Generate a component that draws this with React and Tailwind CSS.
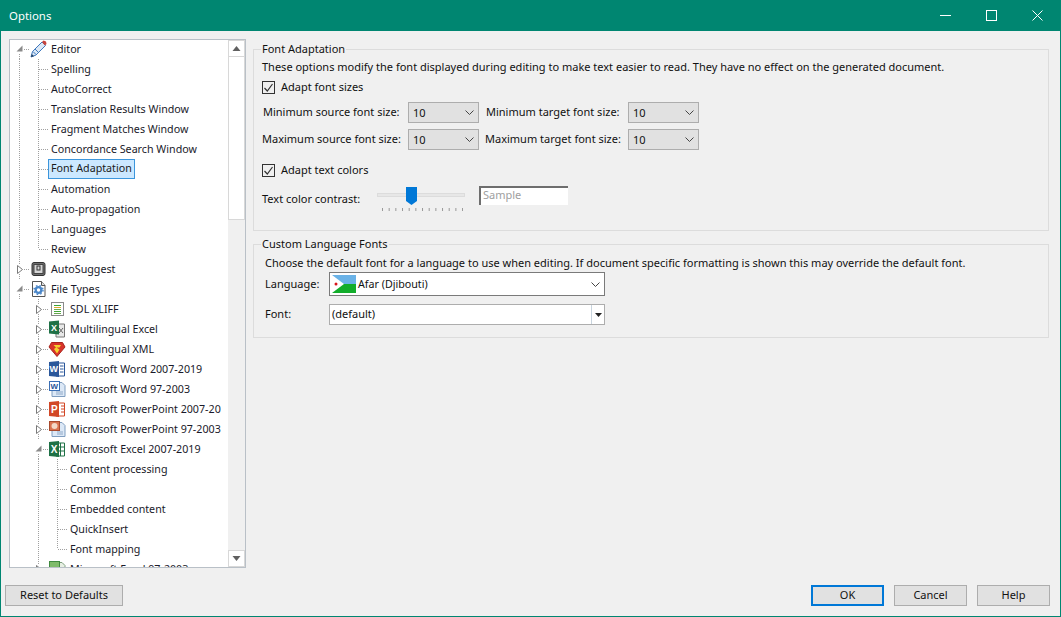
import { ChevronDown } from "lucide-react";

// tree connector cell: "line" | "tee" | "end" | "open" | "closed" | "blank"
function Guide({ type }) {
  const dots = { stroke: "#a0a0a0", strokeWidth: 1, strokeDasharray: "1 1" };
  return (
    <svg width="19" height="20" className="shrink-0">
      {(type === "line" || type === "tee") && <line x1="9.5" y1="0" x2="9.5" y2="20" {...dots} />}
      {type === "end" && <line x1="9.5" y1="0" x2="9.5" y2="10" {...dots} />}
      {(type === "tee" || type === "end") && <line x1="10" y1="10.5" x2="19" y2="10.5" {...dots} />}
      {type === "open" && (
        <>
          <line x1="9.5" y1="15" x2="9.5" y2="20" {...dots} />
          <line x1="14" y1="10.5" x2="19" y2="10.5" {...dots} />
          <path d="M12.5 6.5v6h-6z" fill="#8a8a8a" />
        </>
      )}
      {type === "closed" && (
        <>
          <line x1="9.5" y1="0" x2="9.5" y2="5" {...dots} />
          <line x1="9.5" y1="15" x2="9.5" y2="20" {...dots} />
          <line x1="14" y1="10.5" x2="19" y2="10.5" {...dots} />
          <path d="M7.5 6.5l5 4-5 4z" fill="#fff" stroke="#7a7a7a" />
        </>
      )}
    </svg>
  );
}

const letter = { fontFamily: "Liberation Sans, sans-serif", fontWeight: 700, fill: "#fff" };

function Icon({ name }) {
  return (
    <svg width="19" height="20" viewBox="0 0 19 20" className="shrink-0">
      {name === "pencil" && (
        <>
          <path d="M2 18l1.500-5.500L13 3l3.500 3.500L7 16z" fill="#dbe8f6" stroke="#3f78bd" />
          <path d="M4 12.500l3 3M6 10l3 3" stroke="#3f78bd" />
          <path d="M2 18l.8-3 2.200 2.200z" fill="#24405f" />
          <path d="M13 3l1.500-1.500 2.500 1 .5 2.500-1.500 1.500z" fill="#c8433c" />
        </>
      )}
      {name === "suggest" && (
        <>
          <rect x="3" y="3.500" width="13" height="13" rx="2" fill="#6e6e6e" stroke="#333" />
          <rect x="5" y="5.500" width="9" height="9" fill="#d6d6d6" stroke="#444" />
          <rect x="8" y="7" width="3" height="4" fill="none" stroke="#333" />
        </>
      )}
      {name === "gear" && (
        <>
          <path d="M3.500 2.500h9l3.500 4v11H3.500z" fill="#fff" stroke="#555" />
          <path d="M12.500 2.500v4h3.500" fill="#ddd" stroke="#555" />
          <circle cx="9.500" cy="11" r="2.800" fill="none" stroke="#4a86c8" strokeWidth="2.200" />
          <circle cx="9.500" cy="11" r="4.500" fill="none" stroke="#4a86c8" strokeWidth="1.400" strokeDasharray="1.600 2" />
        </>
      )}
      {name === "xliff" && (
        <>
          <rect x="3.500" y="3.500" width="12" height="13" fill="#fff" stroke="#8a8a8a" />
          <path d="M6 6.500h7M6 12.500h7" stroke="#3fa535" />
          <path d="M6 8.500h7" stroke="#e0a92a" />
          <path d="M6 10.500h7M6 14.500h7" stroke="#6aa84f" />
        </>
      )}
      {name === "mlexcel" && (
        <>
          <path d="M8 5h8.500v13H8z" fill="#e8e8e8" stroke="#777" />
          <path d="M11 9l4 5M15 9l-4 5" stroke="#666" />
          <path d="M1 2.500l10-1v14l-10-1z" fill="#1f7146" />
          <text x="3" y="12" fontSize="9" style={letter}>X</text>
        </>
      )}
      {name === "xml" && (
        <>
          <path d="M3.500 3.500h11L17 8l-8 9.500L1 8z" fill="#d8342a" stroke="#a8241c" />
          <path d="M5.500 6h7.500L11.500 8.500H8.500l3 2-2.500 4-3-4.500 2-1.500z" fill="#f5d22e" />
        </>
      )}
      {name === "word" && (
        <>
          <path d="M8 4h8.500v13H8z" fill="#fff" stroke="#2b579a" />
          <path d="M12 7h3.500M12 10h3.500M12 13h3.500" stroke="#2b579a" />
          <path d="M1 3l10-1v16L1 17z" fill="#2b579a" />
          <text x="1.500" y="13" fontSize="9" style={letter}>W</text>
        </>
      )}
      {name === "oldword" && (
        <>
          <path d="M4 3.500h10l3 3v11H4z" fill="#dce8f6" stroke="#7f9dbf" />
          <path d="M8 13h7M8 15h7" stroke="#8fa9c8" />
          <rect x="1.500" y="2.500" width="10" height="9" fill="#fff" stroke="#3b6fb5" />
          <text x="2.500" y="10" fontSize="8" style={{ ...letter, fill: "#2b579a" }}>W</text>
        </>
      )}
      {name === "ppt" && (
        <>
          <path d="M8 4h8.500v13H8z" fill="#fff" stroke="#d24726" />
          <path d="M13 7h3M13 10h3M13 13h3" stroke="#d24726" />
          <path d="M1 3l10-1v16L1 17z" fill="#d24726" />
          <text x="3" y="13.500" fontSize="10" style={letter}>P</text>
        </>
      )}
      {name === "oldppt" && (
        <>
          <path d="M4 3.500h10l3 3v11H4z" fill="#dce8f6" stroke="#7f9dbf" />
          <path d="M9 13h6M9 15h6" stroke="#8fa9c8" />
          <rect x="1.500" y="2.500" width="10" height="9" fill="#d9734f" stroke="#a8492c" />
          <circle cx="6.500" cy="7" r="3" fill="#f3d9c6" />
        </>
      )}
      {name === "excel" && (
        <>
          <path d="M8 4h8.500v13H8z" fill="#fff" stroke="#1f7146" />
          <path d="M12.500 4v13M8 8h8.500M8 12h8.500" stroke="#1f7146" />
          <path d="M1 3l10-1v16L1 17z" fill="#1f7146" />
          <text x="2.800" y="13.500" fontSize="10" style={letter}>X</text>
        </>
      )}
      {name === "oldexcel" && (
        <>
          <path d="M4 3.500h10l3 3v11H4z" fill="#e8f0e4" stroke="#7f9f7f" />
          <rect x="1.500" y="2.500" width="10" height="9" fill="#7fbb6a" stroke="#3f8a3f" />
        </>
      )}
    </svg>
  );
}

const treeRows = [
  { guides: ["open"], icon: "pencil", label: "Editor" },
  { guides: ["line", "tee"], label: "Spelling" },
  { guides: ["line", "tee"], label: "AutoCorrect" },
  { guides: ["line", "tee"], label: "Translation Results Window" },
  { guides: ["line", "tee"], label: "Fragment Matches Window" },
  { guides: ["line", "tee"], label: "Concordance Search Window" },
  { guides: ["line", "tee"], label: "Font Adaptation", selected: true },
  { guides: ["line", "tee"], label: "Automation" },
  { guides: ["line", "tee"], label: "Auto-propagation" },
  { guides: ["line", "tee"], label: "Languages" },
  { guides: ["line", "end"], label: "Review" },
  { guides: ["closed"], icon: "suggest", label: "AutoSuggest" },
  { guides: ["open"], icon: "gear", label: "File Types" },
  { guides: ["blank", "closed"], icon: "xliff", label: "SDL XLIFF" },
  { guides: ["blank", "closed"], icon: "mlexcel", label: "Multilingual Excel" },
  { guides: ["blank", "closed"], icon: "xml", label: "Multilingual XML" },
  { guides: ["blank", "closed"], icon: "word", label: "Microsoft Word 2007-2019" },
  { guides: ["blank", "closed"], icon: "oldword", label: "Microsoft Word 97-2003" },
  { guides: ["blank", "closed"], icon: "ppt", label: "Microsoft PowerPoint 2007-20" },
  { guides: ["blank", "closed"], icon: "oldppt", label: "Microsoft PowerPoint 97-2003" },
  { guides: ["blank", "open"], icon: "excel", label: "Microsoft Excel 2007-2019" },
  { guides: ["blank", "line", "tee"], label: "Content processing" },
  { guides: ["blank", "line", "tee"], label: "Common" },
  { guides: ["blank", "line", "tee"], label: "Embedded content" },
  { guides: ["blank", "line", "tee"], label: "QuickInsert" },
  { guides: ["blank", "line", "end"], label: "Font mapping" },
  { guides: ["blank", "closed"], icon: "oldexcel", label: "Microsoft Excel 97-2003" },
];

function TreeRow({ row }) {
  return (
    <div className="flex h-5 items-center whitespace-nowrap">
      {row.guides.map((g, i) => (
        <Guide key={i} type={g} />
      ))}
      {row.icon && <Icon name={row.icon} />}
      <span
        className={
          row.selected
            ? "h-[20px] border border-[#3c96dc] bg-[#cce8ff] px-[2px] leading-[17px] text-[#1a1a1a]"
            : "ml-[3px] text-[#1a1a2a]"
        }
      >
        {row.label}
      </span>
    </div>
  );
}

function ScrollButton({ up }) {
  return (
    <div className="flex h-[17px] items-center justify-center border border-[#d8d8d8] bg-white">
      <svg width="9" height="5">
        <path d={up ? "M0.500 5l4-5 4 5z" : "M0.500 0l4 5 4-5z"} fill="#606060" />
      </svg>
    </div>
  );
}

function Check({ label }) {
  return (
    <label className="flex h-[14px] items-center gap-[6px]">
      <span className="flex h-[13px] w-[13px] items-center justify-center border border-[#333] bg-[#f0f0f0]">
        <svg width="11" height="11">
          <path d="M1.500 6l2.800 3L9.500 2" fill="none" stroke="#333" strokeWidth="1.200" />
        </svg>
      </span>
      {label}
    </label>
  );
}

function Chevron() {
  return (
    <svg width="9" height="5" className="shrink-0">
      <path d="M0.500 0.500l4 4 4-4" fill="none" stroke="#444" />
    </svg>
  );
}

function SizeSelect() {
  return (
    <div className="flex h-[21px] w-[71px] items-center justify-between border border-[#adadad] bg-[#e1e1e1] pl-1 pr-[4px]">
      <span className="pt-[1px]">10</span>
      <Chevron />
    </div>
  );
}

function SizeRow({ source, target, sourceWidth, targetWidth }) {
  return (
    <div className="flex h-[21px] items-center whitespace-nowrap">
      <span className={sourceWidth}>{source}</span>
      <SizeSelect />
      <span className={targetWidth}>{target}</span>
      <SizeSelect />
    </div>
  );
}

function DialogButton({ children, primary, className }) {
  return (
    <button
      className={`h-[21px] bg-[#e1e1e1] text-[#111] ${
        primary ? "border-2 border-[#0078d7]" : "border border-[#adadad]"
      } ${className}`}
    >
      {children}
    </button>
  );
}

export default function App() {
  return (
    <div className="flex h-[617px] w-[1061px] flex-col overflow-hidden border border-t-0 border-[#008671] bg-[#f0f0f0] font-['Noto_Sans',sans-serif] text-[11px] text-[#111]">
      <header className="flex h-[31px] shrink-0 items-center justify-between bg-[#008671] pl-[8px] text-[11.400px] text-white">
        Options
        <div className="flex items-center">
          <span className="flex w-[46px] justify-center">
            <svg width="11" height="11"><path d="M0 5.500h11" stroke="#fff" /></svg>
          </span>
          <span className="flex w-[46px] justify-center">
            <svg width="11" height="11"><rect x="0.500" y="0.500" width="10" height="10" fill="none" stroke="#fff" /></svg>
          </span>
          <span className="flex w-[46px] justify-center">
            <svg width="11" height="11"><path d="M0.500 0.500l10 10M10.500 0.500l-10 10" stroke="#fff" /></svg>
          </span>
        </div>
      </header>

      <div className="flex min-h-0 flex-1">
        <aside className="ml-[8px] mt-[8px] flex h-[529px] w-[237px] shrink-0 border border-[#b9c0c7] bg-white text-[10.700px]">
          <div className="min-w-0 flex-1 overflow-hidden">
            <div className="-mt-[1px]">
              {treeRows.map((row) => (
                <TreeRow key={row.label} row={row} />
              ))}
            </div>
          </div>
          <div className="flex w-[17px] shrink-0 flex-col bg-[#f0f0f0]">
            <ScrollButton up />
            <div className="h-[163px] border border-t-0 border-[#d8d8d8] bg-white" />
            <div className="flex-1" />
            <ScrollButton />
          </div>
        </aside>

        <main className="ml-[7px] mr-[11px] min-w-0 flex-1">
          <fieldset className="mt-[10px] h-[190px] border border-[#dcdcdc] pl-[8px]">
            <legend className="-ml-[1px] px-[1px] leading-[16px]">Font Adaptation</legend>
            <p className="mt-[1px] leading-[18px]">
              These options modify the font displayed during editing to make text easier to read. They have no effect on the generated document.
            </p>
            <div className="mt-[4px]"><Check label="Adapt font sizes" /></div>
            <div className="mt-[8px]">
              <SizeRow
                source="Minimum source font size:"
                target="Minimum target font size:"
                sourceWidth="ml-[1px] w-[145px]"
                targetWidth="ml-[7px] w-[142px]"
              />
            </div>
            <div className="mt-[6px]">
              <SizeRow
                source="Maximum source font size:"
                target="Maximum target font size:"
                sourceWidth="w-[146px]"
                targetWidth="ml-[6px] w-[143px]"
              />
            </div>
            <div className="mt-[13px]"><Check label="Adapt text colors" /></div>
            <div className="mt-[9px] flex items-start">
              <span className="mt-[5px] w-[115px]">Text color contrast:</span>
              <div className="w-[88px]">
                <div className="relative mt-[7px] h-[4px] border border-[#dcdcdc] bg-[#e7e7e7]">
                  <svg width="11" height="18" className="absolute left-[28px] top-[-7px]">
                    <path d="M0 0h11v14l-5.500 4L0 14z" fill="#0078d7" />
                  </svg>
                </div>
                <svg width="88" height="3" className="mt-[11px]">
                  <line x1="5" y1="1.500" x2="86" y2="1.500" stroke="#999" strokeWidth="3" strokeDasharray="1 5.670" />
                </svg>
              </div>
              <div className="ml-[14px] h-[19px] w-[89px] border-2 border-b-0 border-r-0 border-[#6e6e6e] bg-white pl-[2px] leading-[13px] text-[#a0a0a0]">
                Sample
              </div>
            </div>
          </fieldset>

          <fieldset className="mt-[5px] h-[102px] border border-[#dcdcdc] pl-[11px]">
            <legend className="-ml-[4px] px-[1px] leading-[16px]">Custom Language Fonts</legend>
            <p className="mt-[2px] leading-[18px]">
              Choose the default font for a language to use when editing. If document specific formatting is shown this may override the default font.
            </p>
            <div className="flex items-center">
              <span className="w-[64px]">Language:</span>
              <div className="flex h-[24px] w-[276px] items-center border border-[#7a7a7a] bg-white pl-[2px] pr-[4px] text-[10.700px]">
                <svg width="24" height="18" className="shrink-0">
                  <rect width="24" height="9" fill="#6ab2e7" />
                  <rect y="9" width="24" height="9" fill="#12ad2b" />
                  <path d="M0 0l12 9-12 9z" fill="#fff" />
                  <circle cx="4" cy="9" r="1.500" fill="#d7141a" />
                </svg>
                <span className="ml-[2px] flex-1">Afar (Djibouti)</span>
                <Chevron />
              </div>
            </div>
            <div className="mt-[8px] flex items-center">
              <span className="w-[64px]">Font:</span>
              <div className="flex h-[21px] w-[276px] items-center border border-[#adadad] bg-white">
                <span className="flex-1 pl-[2px]">(default)</span>
                <span className="flex h-full w-[13px] items-center justify-center border-l border-[#c8d4de]">
                  <svg width="7" height="4"><path d="M0 0h7L3.500 4z" fill="#222" /></svg>
                </span>
              </div>
            </div>
          </fieldset>
        </main>
      </div>

      <footer className="flex h-[47px] shrink-0 items-start pl-[4px] pr-[10px] pt-[16px] text-[11px]">
        <DialogButton className="w-[118px]">Reset to Defaults</DialogButton>
        <DialogButton primary className="ml-auto w-[73px]">OK</DialogButton>
        <DialogButton className="ml-[10px] w-[73px]">Cancel</DialogButton>
        <DialogButton className="ml-[10px] w-[73px]">Help</DialogButton>
      </footer>
    </div>
  );
}
